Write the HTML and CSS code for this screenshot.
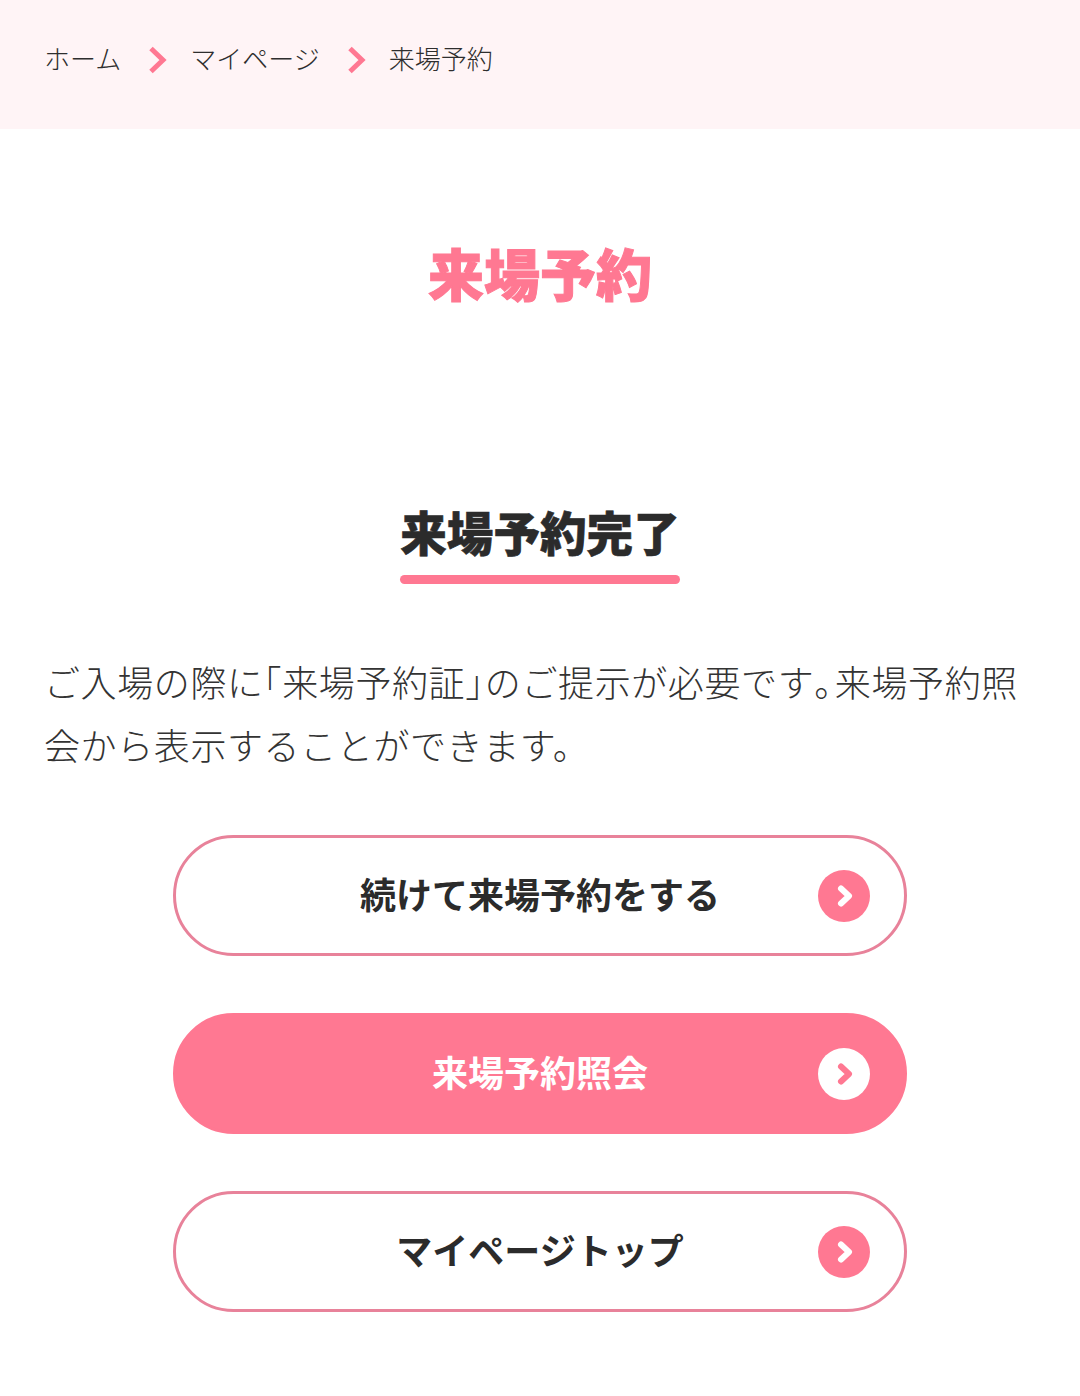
FILE: index.html
```html
<!DOCTYPE html>
<html lang="ja">
<head>
    <meta charset="UTF-8">
    <meta name="viewport" content="width=device-width, initial-scale=1.0">
    <title>来場予約</title>
    <link rel="stylesheet" href="styles.css">
</head>
<body>
    <!-- Breadcrumb -->
    <nav class="breadcrumb">
        <span class="crumb">ホーム</span>
        <svg class="crumb-arrow" viewBox="0 0 20 28"><path d="M3 2.5 L15 14 L3 25.5" /></svg>
        <span class="crumb">マイページ</span>
        <svg class="crumb-arrow" viewBox="0 0 20 28"><path d="M3 2.5 L15 14 L3 25.5" /></svg>
        <span class="crumb">来場予約</span>
    </nav>

    <main class="content">
        <h1 class="page-title">来場予約</h1>

        <div class="section-head">
            <h2 class="section-title">来場予約完了</h2>
        </div>

        <p class="message">ご入場の際に<span class="punct">「</span>来場予約証<span class="punct close-bracket">」</span>のご提示が必要です<span class="punct stop">。</span>来場予約照<br>会から表示することができます。</p>

        <div class="button-list">
            <a class="btn" href="#">
                <span class="btn-label">続けて来場予約をする</span>
                <svg class="btn-icon" viewBox="0 0 52 52"><circle cx="26" cy="26" r="26" /><path d="M23 18.5 L31 26 L23 33.5" /></svg>
            </a>
            <a class="btn btn-primary" href="#">
                <span class="btn-label">来場予約照会</span>
                <svg class="btn-icon" viewBox="0 0 52 52"><circle cx="26" cy="26" r="26" /><path d="M23 18.5 L31 26 L23 33.5" /></svg>
            </a>
            <a class="btn" href="#">
                <span class="btn-label">マイページトップ</span>
                <svg class="btn-icon" viewBox="0 0 52 52"><circle cx="26" cy="26" r="26" /><path d="M23 18.5 L31 26 L23 33.5" /></svg>
            </a>
        </div>
    </main>
</body>
</html>
```

FILE: styles.css
```css
body, html {
    margin: 0;
    padding: 0;
    background: #fff;
    color: #333;
    font-family: "Noto Sans CJK JP", "Noto Sans", sans-serif;
}

/* Breadcrumb */
.breadcrumb {
    height: 129px;
    padding: 0 44px;
    display: flex;
    align-items: center;
    background: #fff4f6;
    font-size: 26px;
    font-weight: 300;
    color: #2e2e2e;
}

.crumb {
    margin-bottom: 13px;
    line-height: 36px;
}

.crumb-arrow {
    width: 20px;
    height: 28px;
    margin: 0 22px 10px 27px;
    fill: none;
    stroke: #ff7892;
    stroke-width: 5;
}

/* Headings */
.page-title {
    margin: 0;
    padding-top: 108px;
    padding-bottom: 4px;
    text-align: center;
    font-size: 56px;
    line-height: 70px;
    font-weight: 900;
    color: #ff7892;
    -webkit-text-stroke: 1px #ff7892;
}

.section-head {
    margin-top: 190px;
    text-align: center;
}

.section-title {
    display: inline-block;
    width: 280px;
    margin: 0;
    padding-bottom: 23px;
    font-size: 46.6px;
    line-height: 60px;
    font-weight: 900;
    color: #2b2b2b;
    white-space: nowrap;
    position: relative;
    -webkit-text-stroke: 0.6px #2b2b2b;
}

.section-title::after {
    content: "";
    position: absolute;
    left: 0;
    right: 0;
    bottom: 0;
    height: 9px;
    border-radius: 5px;
    background: #ff7892;
}

.message {
    margin: 66px 44px 0;
    font-size: 36px;
    line-height: 63px;
    font-weight: 300;
    letter-spacing: 0.6px;
    color: #333;
}

/* punctuation is set half width, then opened up a little */
.punct {
    font-feature-settings: "halt";
}

.close-bracket {
    margin-right: 1px;
}

.stop {
    margin-right: 2px;
}

/* Buttons */
.button-list {
    margin: 59px auto 0;
    width: 734px;
    display: flex;
    flex-direction: column;
    gap: 57px;
}

.btn {
    position: relative;
    height: 121px;
    box-sizing: border-box;
    display: flex;
    align-items: center;
    justify-content: center;
    border: 3px solid #e8829a;
    border-radius: 61px;
    background: #fff;
    color: #2b2b2b;
    font-size: 36px;
    font-weight: 700;
    text-decoration: none;
}

.btn-label {
    margin-bottom: 5px;
}

.btn-primary {
    border-color: #ff7892;
    background: #ff7892;
    color: #fff;
}

.btn-icon {
    position: absolute;
    right: 34px;
    top: 50%;
    width: 52px;
    height: 52px;
    margin-top: -26px;
    fill: #ff7892;
    stroke: none;
}

.btn-icon path {
    fill: none;
    stroke: #fff;
    stroke-width: 6;
    stroke-linecap: round;
    stroke-linejoin: round;
}

.btn-primary .btn-icon {
    fill: #fff;
}

.btn-primary .btn-icon path {
    stroke: #ff7892;
}
```
